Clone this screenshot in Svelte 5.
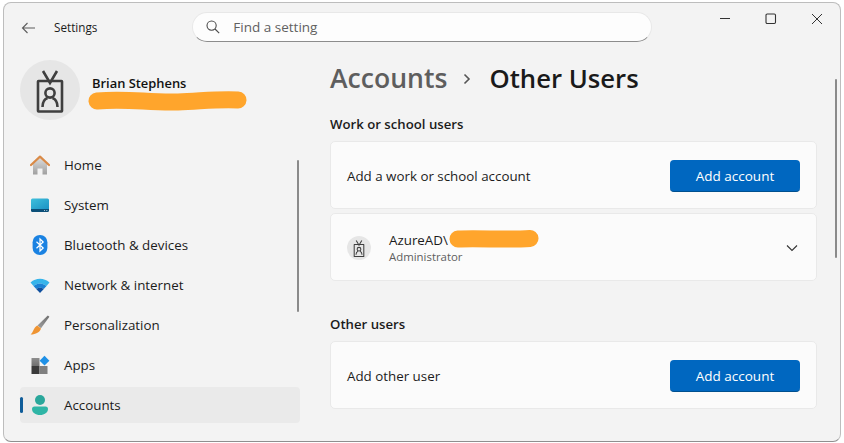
<script>
  const navItems = [
    { id: 'home', label: 'Home' },
    { id: 'system', label: 'System' },
    { id: 'bluetooth', label: 'Bluetooth & devices' },
    { id: 'network', label: 'Network & internet' },
    { id: 'personalization', label: 'Personalization' },
    { id: 'apps', label: 'Apps' },
    { id: 'accounts', label: 'Accounts', active: true }
  ];
</script>

{#snippet badge(size)}
  <svg width={size} height={size} viewBox="0 0 60 60" fill="none" stroke="#3f3f3f" stroke-width="2.6">
    <rect x="18" y="21" width="24" height="30.5" rx="0.5" />
    <path d="M23 11 L30 23 L37 11" />
    <circle cx="30" cy="33" r="4.6" />
    <path d="M22.5 47 C22.5 41 25 39 27.5 38 M37.5 47 C37.5 41 35 39 32.5 38" />
  </svg>
{/snippet}

<div class="window">
  <header class="titlebar">
    <button class="back" aria-label="Back">
      <svg width="16" height="16" viewBox="0 0 16 16" fill="none" stroke="#5c5c5c" stroke-width="1.1">
        <path d="M15 8 H2.5 M7.5 3 L2.5 8 L7.5 13" />
      </svg>
    </button>
    <span class="app-title">Settings</span>
    <div class="search">
      <svg width="14" height="14" viewBox="0 0 14 14" fill="none" stroke="#4a4a4a" stroke-width="1.1">
        <circle cx="5.6" cy="5.6" r="4.6" />
        <path d="M9 9 L13.2 13.2" />
      </svg>
      <span>Find a setting</span>
    </div>
    <div class="controls">
      <button aria-label="Minimize">
        <svg width="12" height="12" viewBox="0 0 12 12" stroke="#333" fill="none"><path d="M1 5.5 H11" /></svg>
      </button>
      <button aria-label="Maximize">
        <svg width="12" height="12" viewBox="0 0 12 12" stroke="#333" stroke-width="1.1" fill="none"><rect x="1" y="1" width="9.5" height="9.5" rx="1.2" /></svg>
      </button>
      <button aria-label="Close">
        <svg width="12" height="12" viewBox="0 0 12 12" stroke="#333" fill="none"><path d="M1 1 L11 11 M11 1 L1 11" /></svg>
      </button>
    </div>
  </header>

  <div class="layout">
    <aside class="sidebar">
      <div class="profile">
        <div class="avatar">{@render badge(60)}</div>
        <div class="profile-name">Brian Stephens</div>
        <svg class="scribble name-scribble" width="160" height="22" viewBox="0 0 160 22">
          <path d="M9 12 C40 9 60 14 90 13 C115 12 130 10 150 11" stroke="#ffa52c" stroke-width="17" stroke-linecap="round" fill="none" />
        </svg>
      </div>

      <nav>
        {#each navItems as item}
          <div class="nav-item" class:active={item.active}>
            <span class="nav-icon">
              {#if item.id === 'home'}
                <svg width="20" height="20" viewBox="0 0 20 20">
                  <defs>
                    <linearGradient id="homeWall" x1="0" y1="0" x2="0" y2="1">
                      <stop offset="0" stop-color="#dcdcdc" /><stop offset="1" stop-color="#9f9f9f" />
                    </linearGradient>
                  </defs>
                  <path d="M3 9 L10 3 L17 9 V19.5 H12.5 V13.5 H7.5 V19.5 H3 Z" fill="url(#homeWall)" />
                  <path d="M1 10 L10 1.6 L19 10" fill="none" stroke="#d98a47" stroke-width="2.2" stroke-linecap="round" stroke-linejoin="round" />
                </svg>
              {:else if item.id === 'system'}
                <svg width="20" height="20" viewBox="0 0 20 20">
                  <defs>
                    <linearGradient id="sysScreen" x1="0" y1="0" x2="1" y2="1">
                      <stop offset="0" stop-color="#3fc0dc" /><stop offset="1" stop-color="#1c92c4" />
                    </linearGradient>
                  </defs>
                  <path d="M1 5 a1.5 1.5 0 0 1 1.5 -1.5 H17.5 a1.5 1.5 0 0 1 1.5 1.5 V14 H1 Z" fill="url(#sysScreen)" />
                  <path d="M1 14 H19 V15.5 a1.5 1.5 0 0 1 -1.5 1.5 H2.5 a1.5 1.5 0 0 1 -1.5 -1.5 Z" fill="#0b4f78" />
                  <path d="M14 15.5 h1 M16.3 15.5 h1" stroke="#cfe6f2" stroke-width="0.8" />
                </svg>
              {:else if item.id === 'bluetooth'}
                <svg width="20" height="20" viewBox="0 0 20 20">
                  <rect x="2.6" y="0" width="14.8" height="20" rx="7.2" fill="#1a82e2" />
                  <path d="M6.5 6.8 L13.2 13 L10 16 V4 L13.2 7 L6.5 13.2" fill="none" stroke="#fff" stroke-width="1.2" />
                </svg>
              {:else if item.id === 'network'}
                <svg width="20" height="20" viewBox="0 0 20 20">
                  <path d="M0.5 7.5 C6 2.5 14 2.5 19.5 7.5 L16.5 11 C12.5 7.5 7.5 7.5 3.5 11 Z" fill="#36b4ea" />
                  <path d="M3.5 11 C7.5 7.5 12.5 7.5 16.5 11 L13.8 14 C11.5 12.2 8.5 12.2 6.2 14 Z" fill="#1b82d4" />
                  <path d="M6.2 14 C8.5 12.2 11.5 12.2 13.8 14 L10 18 Z" fill="#0f4f9e" />
                </svg>
              {:else if item.id === 'personalization'}
                <svg width="20" height="20" viewBox="0 0 20 20">
                  <defs>
                    <linearGradient id="brushHandle" x1="0" y1="1" x2="1" y2="0">
                      <stop offset="0" stop-color="#a0a0a0" /><stop offset="1" stop-color="#6c6c6c" />
                    </linearGradient>
                  </defs>
                  <path d="M7.5 10.5 L17.8 0.6 L19.4 1.8 L11 13.2 Z" fill="url(#brushHandle)" />
                  <path d="M7.2 10.6 L11 13.4 C10 17 6 19.4 0.6 19.4 C3.4 17.6 3.4 12.6 7.2 10.6 Z" fill="#ef9432" />
                </svg>
              {:else if item.id === 'apps'}
                <svg width="20" height="20" viewBox="0 0 20 20">
                  <defs>
                    <linearGradient id="appsGrey" x1="0" y1="0" x2="0" y2="1">
                      <stop offset="0" stop-color="#8e8e8e" /><stop offset="1" stop-color="#6f6f6f" />
                    </linearGradient>
                  </defs>
                  <rect x="1.5" y="3" width="8" height="8" fill="url(#appsGrey)" />
                  <rect x="1.5" y="11" width="8" height="8" fill="#3a3a3a" />
                  <rect x="9.5" y="11" width="8" height="8" fill="#7f7f7f" />
                  <path d="M14.5 0.8 L19.4 5.7 L14.5 10.6 L9.6 5.7 Z" fill="#1e90e6" />
                </svg>
              {:else}
                <svg width="20" height="20" viewBox="0 0 20 20">
                  <circle cx="10" cy="5" r="5" fill="#2aa79b" />
                  <path d="M2 14 a2.5 2.5 0 0 1 2.5 -2.5 H15.5 a2.5 2.5 0 0 1 2.5 2.5 c0 3.6 -3.6 6 -8 6 s-8 -2.4 -8 -6 Z" fill="#2fb5a6" />
                </svg>
              {/if}
            </span>
            <span>{item.label}</span>
          </div>
        {/each}
      </nav>
      <div class="scrollbar nav-scroll"></div>
    </aside>

    <main class="content">
      <h1><span class="crumb">Accounts</span>
        <svg class="crumb-sep" width="10" height="12" viewBox="0 0 10 12" fill="none" stroke="#555" stroke-width="1.6"><path d="M2.5 1.5 L7 6 L2.5 10.5" /></svg>
        <span>Other Users</span></h1>

      <h2>Work or school users</h2>
      <section class="card">
        <span>Add a work or school account</span>
        <button class="primary">Add account</button>
      </section>
      <section class="card user-card">
        <div class="user-avatar">{@render badge(24)}</div>
        <div class="user-text">
          <div class="user-name">AzureAD\</div>
          <div class="user-role">Administrator</div>
        </div>
        <svg class="scribble user-scribble" width="92" height="20" viewBox="0 0 92 20">
          <path d="M10 10 C30 9 60 11 82 9.5" stroke="#ffa52c" stroke-width="17" stroke-linecap="round" fill="none" />
        </svg>
        <svg class="chevron" width="12" height="8" viewBox="0 0 12 8" fill="none" stroke="#333" stroke-width="1.1"><path d="M1 1.5 L6 6.5 L11 1.5" /></svg>
      </section>

      <h2 class="second">Other users</h2>
      <section class="card">
        <span>Add other user</span>
        <button class="primary">Add account</button>
      </section>
    </main>
    <div class="scrollbar main-scroll"></div>
  </div>
</div>

<style>
  :global(body) {
    background: #fff;
    overflow: hidden;
  }
  .window {
    position: relative;
    box-sizing: border-box;
    height: 440px;
    margin: 2px 3px 0;
    background: #f3f3f3;
    border: 1px solid #bdbdbd;
    border-bottom-color: #8f8f8f;
    border-radius: 8px;
    overflow: hidden;
    font-family: "Open Sans", "Noto Sans", sans-serif;
    font-size: 13.35px;
    color: #1b1b1b;
  }
  button {
    font: inherit;
    border: none;
    background: none;
    padding: 0;
  }
  .titlebar {
    display: flex;
    align-items: center;
    height: 45px;
  }
  .back {
    display: flex;
    margin-left: 16px;
    margin-top: 4px;
  }
  .app-title {
    margin-left: 18px;
    margin-top: 3px;
    font-size: 11.7px;
  }
  .search {
    box-sizing: border-box;
    display: flex;
    align-items: center;
    gap: 13px;
    width: 460px;
    height: 30px;
    margin-left: 95px;
    margin-top: 3px;
    padding-left: 13px;
    background: #fdfdfd;
    border: 1px solid #e8e8e8;
    border-bottom-color: #8c8c8c;
    border-radius: 15px;
    font-size: 13.5px;
    color: #616161;
  }
  .controls {
    display: flex;
    margin-left: auto;
    align-self: flex-start;
  }
  .controls button {
    display: flex;
    align-items: center;
    justify-content: center;
    width: 46px;
    height: 32px;
  }
  .layout {
    display: flex;
  }
  .sidebar {
    position: relative;
    box-sizing: border-box;
    width: 326px;
    padding: 12px 0 0 16px;
  }
  .profile {
    position: relative;
    display: flex;
    align-items: flex-start;
    height: 60px;
  }
  .avatar {
    display: flex;
    width: 60px;
    height: 60px;
    border-radius: 50%;
    background: #e6e6e6;
  }
  .profile-name {
    margin: 14px 0 0 12px;
    font-weight: 600;
    font-size: 12.9px;
    line-height: 18px;
    color: #111;
  }
  .scribble {
    position: absolute;
  }
  .name-scribble {
    left: 68px;
    top: 29px;
  }
  nav {
    display: flex;
    flex-direction: column;
    gap: 4px;
    width: 280px;
    margin-top: 27px;
  }
  .nav-item {
    position: relative;
    display: flex;
    align-items: center;
    gap: 14px;
    height: 36px;
    padding-left: 10px;
    border-radius: 4px;
  }
  .nav-item.active {
    background: #eaeaea;
  }
  .nav-item.active::before {
    content: "";
    position: absolute;
    left: 0;
    top: 10px;
    width: 3px;
    height: 16px;
    border-radius: 2px;
    background: #0f5c99;
  }
  .nav-icon {
    display: flex;
  }
  .scrollbar {
    position: absolute;
    width: 2px;
    border-radius: 1px;
    background: #8a8a8a;
  }
  .nav-scroll {
    left: 293px;
    top: 112px;
    height: 152px;
  }
  .main-scroll {
    right: 3px;
    top: 76px;
    height: 179px;
  }
  .content {
    width: 487px;
  }
  h1 {
    display: flex;
    align-items: center;
    margin: 10px 0 0;
    height: 40px;
    font-size: 25.7px;
    font-weight: 600;
    color: #1a1a1a;
  }
  .crumb {
    font-size: 26.6px;
    color: #5e5e5e;
  }
  .crumb-sep {
    margin: 2px 17px 0 15px;
  }
  h2 {
    margin: 17px 0 8px;
    font-size: 13.2px;
    line-height: 18px;
    font-weight: 600;
    color: #1b1b1b;
  }
  h2.second {
    margin-top: 34px;
  }
  .card {
    position: relative;
    box-sizing: border-box;
    display: flex;
    align-items: center;
    justify-content: space-between;
    height: 68px;
    padding: 2px 16px 0;
    background: #fbfbfb;
    border: 1px solid #e9e9e9;
    border-radius: 5px;
  }
  .card + .card {
    margin-top: 4px;
  }
  .primary {
    width: 130px;
    height: 32px;
    padding-top: 1px;
    border-radius: 4px;
    background: #0067c0;
    border-bottom: 1px solid #00508f;
    color: #fff;
    font-size: 13.5px;
  }
  .user-card {
    justify-content: flex-start;
  }
  .user-avatar {
    display: flex;
    width: 24px;
    height: 24px;
    border-radius: 50%;
    background: #e6e6e6;
  }
  .user-text {
    margin-left: 18px;
  }
  .user-name {
    line-height: 18px;
  }
  .user-role {
    font-size: 11.4px;
    line-height: 16px;
    color: #5e5e5e;
  }
  .user-scribble {
    left: 117px;
    top: 15px;
  }
  .chevron {
    margin-left: auto;
    margin-right: 2px;
  }
</style>
